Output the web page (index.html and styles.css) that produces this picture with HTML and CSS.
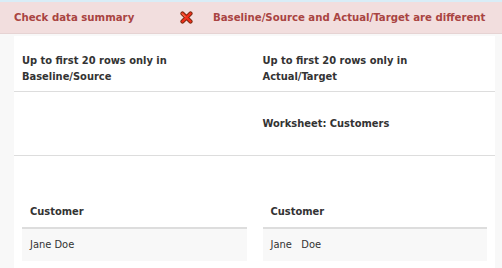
FILE: index.html
```html
<!DOCTYPE html>
<html>
<head>
<meta charset="utf-8">
<link rel="stylesheet" href="styles.css">
</head>
<body>
<div class="topstrip"></div>
<div class="alert">
  <span class="alert-title">Check data summary</span>
  <span class="alert-icon">
    <svg width="13" height="13" viewBox="0 0 13 13">
      <path d="M2.5 2.5 L10.5 10.5 M10.5 2.5 L2.5 10.5" stroke="#7a2a10" stroke-width="4.2" stroke-linecap="round"/>
      <path d="M2.5 2.5 L10.5 10.5 M10.5 2.5 L2.5 10.5" stroke="#f0301c" stroke-width="2.4" stroke-linecap="round"/>
      <path d="M2.2 2.8 L5 5.6" stroke="#ff9a6a" stroke-width="0.9" stroke-linecap="round"/>
    </svg>
  </span>
  <span class="alert-msg">Baseline/Source and Actual/Target are different</span>
</div>
<div class="panel">
  <div class="grid">
    <div class="cell head">Up to first 20 rows only in<br>Baseline/Source</div>
    <div class="cell head">Up to first 20 rows only in<br>Actual/Target</div>
    <div class="cell sheet"></div>
    <div class="cell sheet"><b>Worksheet: Customers</b></div>
    <div class="cell data">
      <table class="tbl">
        <thead><tr><th>Customer</th></tr></thead>
        <tbody><tr><td>Jane Doe</td></tr></tbody>
      </table>
    </div>
    <div class="cell data">
      <table class="tbl">
        <thead><tr><th>Customer</th></tr></thead>
        <tbody><tr><td class="pre">Jane   Doe</td></tr></tbody>
      </table>
    </div>
  </div>
</div>
</body>
</html>
```
FILE: styles.css
```css
html, body {
  margin: 0;
  padding: 0;
}
body {
  background: #f8f8f8;
  font-family: "DejaVu Sans Condensed", "DejaVu Sans", Verdana, sans-serif;
  font-size: 11px;
  line-height: 16px;
  color: #333;
  width: 502px;
  height: 268px;
  overflow: hidden;
}
.topstrip {
  height: 2px;
  background: #d9edf7;
}
.alert {
  height: 31px;
  background: #f2dede;
  border-bottom: 1px solid #e6d3d3;
  display: flex;
  align-items: center;
  color: #a94442;
  font-weight: bold;
  font-size: 11.3px;
}
.alert-title {
  margin-left: 14px;
  width: 166px;
}
.alert-icon {
  width: 33px;
  display: flex;
  align-items: center;
}
.alert-icon svg {
  display: block;
}
.panel {
  margin: 2px 7px 0 14px;
  background: #fff;
  height: 240px;
}
.grid {
  display: grid;
  grid-template-columns: 1fr 1fr;
}
.cell {
  padding: 0 8px;
}
.head {
  font-weight: bold;
  padding-top: 17px;
  padding-bottom: 6px;
  border-bottom: 1px solid #ddd;
}
.sheet {
  padding-top: 24px;
  padding-bottom: 23px;
  border-bottom: 1px solid #ddd;
}
.data {
  padding-top: 40px;
}
.tbl {
  width: 100%;
  border-collapse: collapse;
}
.tbl th {
  text-align: left;
  font-weight: bold;
  padding: 8px 8px 7px;
  border-bottom: 2px solid #ddd;
}
.tbl td {
  padding: 8px;
  background: #f8f8f8;
}
.pre {
  white-space: pre;
}
```
